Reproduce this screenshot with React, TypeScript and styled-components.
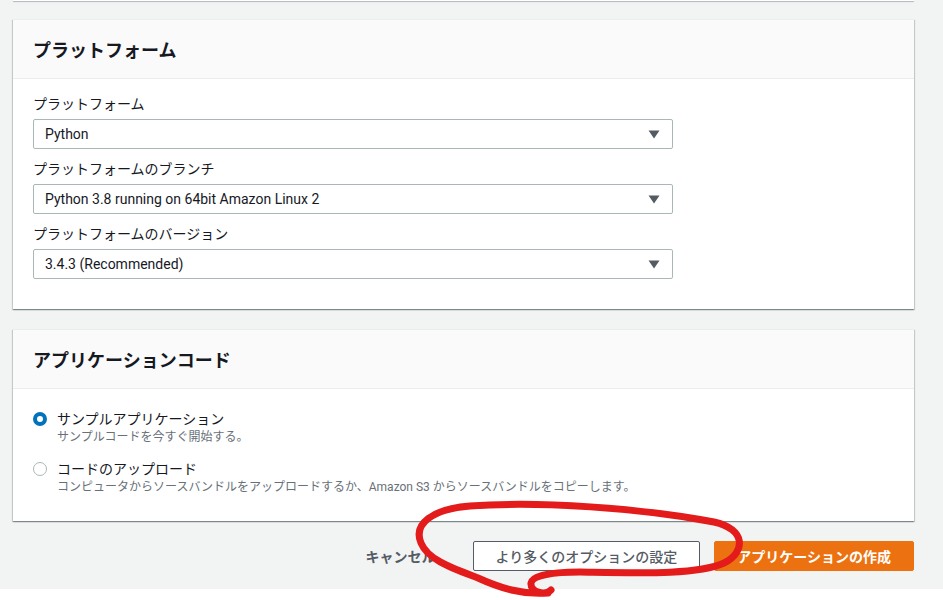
import React, { useState } from "react";
import styled, { createGlobalStyle } from "styled-components";

const GlobalStyle = createGlobalStyle`
  html, body {
    margin: 0;
    padding: 0;
    background: #ffffff;
  }
  body {
    font-family: Roboto, "Noto Sans CJK JP", "Noto Sans", sans-serif;
    color: #16191f;
  }
`;

const Frame = styled.div`
  position: relative;
  width: 943px;
  height: 600px;
  overflow: hidden;
`;

const Page = styled.div`
  width: 943px;
  height: 589px;
  background: #f2f3f3;
  overflow: hidden;
`;

const Column = styled.div`
  width: 901px;
  margin-left: 13px;
  display: flex;
  flex-direction: column;
  gap: 20px;
`;

const PrevCardEdge = styled.div`
  height: 1px;
  margin-bottom: -2px;
  background: #ffffff;
  box-shadow: 0 1px 1px 0 rgba(0, 28, 36, 0.3);
`;

const Card = styled.section`
  background: #ffffff;
  border-top: 1px solid #eaeded;
  box-shadow: 0 1px 1px 0 rgba(0, 28, 36, 0.3), 1px 1px 1px 0 rgba(0, 28, 36, 0.15),
    -1px 1px 1px 0 rgba(0, 28, 36, 0.15);
`;

const CardHeader = styled.header`
  height: 58px;
  background: #fafafa;
  border-bottom: 1px solid #eaeded;
  display: flex;
  align-items: center;
  padding: 0 20px;
  h2 {
    margin: 0;
    font-size: 18px;
    font-weight: 700;
    color: #16191f;
  }
`;

const CardBody = styled.div<{ $pad: string }>`
  padding: ${(p) => p.$pad};
  display: flex;
  flex-direction: column;
`;

const Field = styled.div`
  display: flex;
  flex-direction: column;
  & + & {
    margin-top: 10px;
  }
`;

const Label = styled.label`
  font-size: 14px;
  line-height: 20px;
  color: #16191f;
  margin-bottom: 5px;
`;

const Select = styled.div`
  width: 640px;
  height: 30px;
  box-sizing: border-box;
  border: 1px solid #aab7b8;
  border-radius: 2px;
  display: flex;
  align-items: center;
  justify-content: space-between;
  padding: 0 12px 0 11px;
  font-size: 14px;
  color: #16191f;
  cursor: pointer;
`;

const Caret = () => (
  <svg width="12" height="9" viewBox="0 0 12 9">
    <path d="M0.5 0.5 H11.5 L6 8.5 Z" fill="#545b64" />
  </svg>
);

const RadioRow = styled.div`
  display: flex;
  align-items: flex-start;
  gap: 10px;
  cursor: pointer;
  & + & {
    margin-top: 13px;
  }
`;

const RadioDot = styled.span<{ $on: boolean }>`
  width: 14px;
  height: 14px;
  margin-top: 3px;
  box-sizing: border-box;
  border-radius: 50%;
  flex-shrink: 0;
  background: #ffffff;
  border: ${(p) => (p.$on ? "4px solid #0073bb" : "1px solid #aab7b8")};
`;

const RadioText = styled.div`
  display: flex;
  flex-direction: column;
  .title {
    font-size: 14px;
    line-height: 20px;
    color: #16191f;
  }
  .desc {
    font-size: 12px;
    line-height: 17px;
    color: #687078;
  }
`;

const Footer = styled.div`
  display: flex;
  justify-content: flex-end;
  align-items: center;
  gap: 14px;
`;

const Button = styled.button<{ $variant: "link" | "normal" | "primary" }>`
  height: 30px;
  box-sizing: border-box;
  font-family: inherit;
  font-size: 14px;
  font-weight: ${(p) => (p.$variant === "normal" ? 500 : 700)};
  border-radius: 2px;
  cursor: pointer;
  padding: 0 22px;
  color: ${(p) => (p.$variant === "primary" ? "#ffffff" : "#545b64")};
  background: ${(p) => (p.$variant === "primary" ? "#ec7211" : p.$variant === "normal" ? "#ffffff" : "transparent")};
  border: 1px solid
    ${(p) => (p.$variant === "primary" ? "#ec7211" : p.$variant === "normal" ? "#545b64" : "transparent")};
`;

const Scribble = styled.svg`
  position: absolute;
  left: 0;
  top: 0;
  pointer-events: none;
`;

const selects = [
  { label: "プラットフォーム", value: "Python" },
  { label: "プラットフォームのブランチ", value: "Python 3.8 running on 64bit Amazon Linux 2" },
  { label: "プラットフォームのバージョン", value: "3.4.3 (Recommended)" },
];

const options = [
  { title: "サンプルアプリケーション", desc: "サンプルコードを今すぐ開始する。" },
  {
    title: "コードのアップロード",
    desc: "コンピュータからソースバンドルをアップロードするか、Amazon S3 からソースバンドルをコピーします。",
  },
];

export default function App() {
  const [selected, setSelected] = useState(0);

  return (
    <>
      <GlobalStyle />
      <Frame>
        <Page>
          <Column>
            <PrevCardEdge />
            <Card>
              <CardHeader>
                <h2>プラットフォーム</h2>
              </CardHeader>
              <CardBody $pad="15px 20px 30px">
                {selects.map((s) => (
                  <Field key={s.label}>
                    <Label>{s.label}</Label>
                    <Select>
                      <span>{s.value}</span>
                      <Caret />
                    </Select>
                  </Field>
                ))}
              </CardBody>
            </Card>
            <Card>
              <CardHeader>
                <h2>アプリケーションコード</h2>
              </CardHeader>
              <CardBody $pad="20px 20px 25px">
                {options.map((o, i) => (
                  <RadioRow key={o.title} onClick={() => setSelected(i)}>
                    <RadioDot $on={selected === i} />
                    <RadioText>
                      <span className="title">{o.title}</span>
                      <span className="desc">{o.desc}</span>
                    </RadioText>
                  </RadioRow>
                ))}
              </CardBody>
            </Card>
            <Footer>
              <Button $variant="link">キャンセル</Button>
              <Button $variant="normal">より多くのオプションの設定</Button>
              <Button $variant="primary">アプリケーションの作成</Button>
            </Footer>
          </Column>
        </Page>
        <Scribble width="943" height="600" viewBox="0 0 943 600">
          <path
            d="M548 593 C522 595 500 588 478 578 C452 568 428 560 421 543 C413 524 432 509 470 506 C540 501 640 508 714 522 C746 529 746 552 724 563 C698 575 640 573 580 572 C554 572 532 575 531 583 C530 592 545 596 551 590"
            fill="none"
            stroke="#e31b1b"
            strokeWidth="7"
            strokeLinecap="round"
            strokeLinejoin="round"
          />
        </Scribble>
      </Frame>
    </>
  );
}
